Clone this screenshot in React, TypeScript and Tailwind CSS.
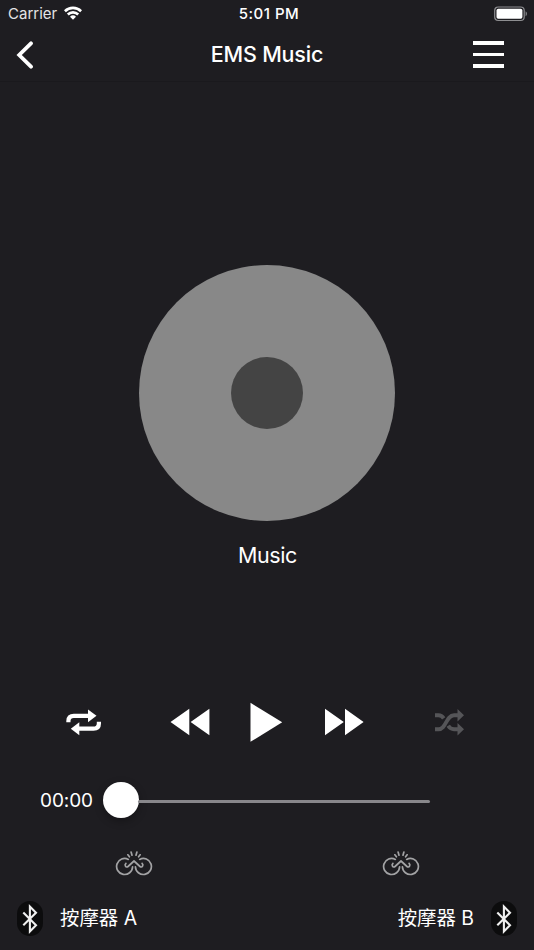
import React, { useState } from 'react';

function WifiIcon() {
  return (
    <svg width="18" height="14" viewBox="0 0 18 14" fill="none" stroke="white" strokeWidth="2.6" className="-mt-[2px]">
      <path d="M0.9 5.2a11.6 11.6 0 0 1 16.2 0" />
      <path d="M3.8 8.5a7.4 7.4 0 0 1 10.4 0" />
      <path d="M9 13.8L6 10.8a4.3 4.3 0 0 1 6 0z" fill="white" stroke="none" />
    </svg>
  );
}

function BatteryIcon() {
  return (
    <svg width="34" height="16" viewBox="0 0 34 16" fill="none" className="-mt-px">
      <rect x="0.7" y="1" width="29.5" height="13.5" rx="3.5" stroke="#8e8e91" strokeWidth="1.2" />
      <rect x="2.5" y="2.8" width="25.9" height="9.9" rx="1.7" fill="white" />
      <path d="M31.6 5.3c1.7 0.8 1.7 4.2 0 5z" fill="#8e8e91" />
    </svg>
  );
}

function RepeatIcon() {
  return (
    <svg width="35" height="27" viewBox="0 0 35 27">
      <path d="M2.4 13.3V12Q2.4 6.8 7.8 6.8H23" fill="none" stroke="white" strokeWidth="4.2" />
      <path d="M22 0.5L30.5 6.8L22 13.2z" fill="white" />
      <path d="M32.9 12.8V14.5Q32.9 19.7 27.5 19.7H12" fill="none" stroke="white" strokeWidth="4.2" />
      <path d="M13.3 13.3L4.8 19.7L13.3 26.2z" fill="white" />
    </svg>
  );
}

function ShuffleIcon() {
  return (
    <svg width="29" height="27" viewBox="0 0 29 27" fill="none" stroke="#555558" strokeWidth="3.9">
      <path d="M0 6.3H3.5Q6.7 6.3 8.7 9.3" />
      <path d="M13.2 16.7Q15.5 20.2 19 20.2H23" />
      <path d="M0 20.2H3.5C11.2 20.2 11 6.3 19 6.3H23" />
      <path d="M22.5 0L29 6.3L22.5 12.6zM22.5 13.9L29 20.2L22.5 26.5z" fill="#555558" stroke="none" />
    </svg>
  );
}

function UnlinkIcon() {
  return (
    <svg
      width="38"
      height="26"
      viewBox="0 0 38 26"
      fill="none"
      stroke="#a3a3a5"
      strokeWidth="1.7"
      strokeLinecap="round"
      strokeLinejoin="round"
    >
      <path d="M13.3 8.4A8 8 0 1 0 17.6 15.8" />
      <path d="M24.7 8.4A8 8 0 1 1 20.4 15.8" />
      <path d="M10.9 12.4C9 14.4 11.1 17.1 13 15.5L19 10L25 15.5C26.9 17.1 29 14.4 27.1 12.4" />
      <path d="M12.9 3.8L14.4 5.8M16.1 1L17 4.2M21.9 1L21 4.2M25.1 3.8L23.6 5.8" />
    </svg>
  );
}

function BluetoothBadge() {
  return (
    <div className="flex h-[35px] w-[26px] items-center justify-center rounded-full bg-[#0c0c0d]">
      <svg width="16" height="30" viewBox="0 0 16 30" fill="none" stroke="#f0f0f0" strokeWidth="2.1">
        <path d="M1.3 8.5L14 21.3L7.9 27.4V2.6L14 8.7L1.3 21.3" />
      </svg>
    </div>
  );
}

export default function App() {
  const [playing, setPlaying] = useState(false);

  return (
    <div className="flex h-[950px] w-[534px] flex-col overflow-hidden bg-[#1e1d21] font-['Inter','Noto_Sans_CJK_SC',sans-serif] text-white">
      <div className="grid h-7 grid-cols-3 items-center pr-[6px] pl-2">
        <div className="flex items-center gap-[6px] text-[15px]">
          <span className="w-[50px] text-[#e4e4e5]">Carrier</span>
          <WifiIcon />
        </div>
        <span className="pl-[2px] text-center text-[15px] font-medium tracking-[0.5px] whitespace-nowrap">5:01 PM</span>
        <div className="flex justify-end">
          <BatteryIcon />
        </div>
      </div>

      <header className="grid h-[54px] grid-cols-3 items-center border-b border-[#1a191d] pr-[30px] pl-4">
        <button aria-label="Back">
          <svg width="18" height="28" viewBox="0 0 18 28" fill="none" stroke="white" strokeWidth="3.8" strokeLinecap="round">
            <path d="M15 2.3L3.2 14L15 25.7" />
          </svg>
        </button>
        <h1 className="pl-[14px] text-center text-[21.5px] font-medium tracking-[-0.2px] whitespace-nowrap">EMS Music</h1>
        <button aria-label="Menu" className="flex flex-col gap-[8px] justify-self-end">
          <span className="h-[3.6px] w-[31px] bg-white" />
          <span className="h-[3.6px] w-[31px] bg-white" />
          <span className="h-[3.6px] w-[31px] bg-white" />
        </button>
      </header>

      <main className="flex h-[602px] flex-col items-center pt-[183px]">
        <div className="flex size-[256px] items-center justify-center rounded-full bg-[#888888]">
          <div className="size-[72px] rounded-full bg-[#444444]" />
        </div>
        <p className="mt-[18px] pl-px text-[21.5px] leading-8 tracking-[-0.4px]">Music</p>
      </main>

      <div className="flex h-[76px] items-center pl-[66px]">
        <button aria-label="Repeat">
          <RepeatIcon />
        </button>
        <button aria-label="Previous" className="ml-[69px]">
          <svg width="40" height="28" viewBox="0 0 40 28" fill="white">
            <path d="M0.5 14L19.3 0.8V27.2zM20.6 14L39.4 0.8V27.2z" />
          </svg>
        </button>
        <button aria-label="Play" className="ml-[40px]" onClick={() => setPlaying(!playing)}>
          <svg width="33" height="40" viewBox="0 0 33 40" fill="white">
            {playing ? <path d="M4 1H13V39H4zM20 1H29V39H20z" /> : <path d="M0.5 0.8L32.2 20.3L0.5 39.8z" />}
          </svg>
        </button>
        <button aria-label="Next" className="ml-[41px]">
          <svg width="40" height="28" viewBox="0 0 40 28" fill="white">
            <path d="M1 0.8L19.8 14L1 27.2zM21 0.8L39.6 14L21 27.2z" />
          </svg>
        </button>
        <button aria-label="Shuffle" className="ml-[71px]">
          <ShuffleIcon />
        </button>
      </div>

      <div className="flex h-20 items-center pl-10">
        <span className="w-[63px] pt-[2px] text-[19px] tracking-[-0.1px]">00:00</span>
        <div className="size-9 rounded-full bg-white shadow-[0_3px_8px_rgba(0,0,0,0.3)]" />
        <div className="mt-[3px] -ml-px h-[3px] w-[292px] rounded-full bg-[#88878b]" />
      </div>

      <div className="flex h-[48px] justify-between pt-[11px] pr-[114px] pl-[115px]">
        <UnlinkIcon />
        <UnlinkIcon />
      </div>

      <footer className="flex h-[61px] items-center justify-between pr-[17px] pl-[17px] text-[19.4px]">
        <div className="flex items-center gap-[17px]">
          <BluetoothBadge />
          <span>按摩器 A</span>
        </div>
        <div className="flex items-center gap-[17px]">
          <span>按摩器 B</span>
          <BluetoothBadge />
        </div>
      </footer>
    </div>
  );
}
